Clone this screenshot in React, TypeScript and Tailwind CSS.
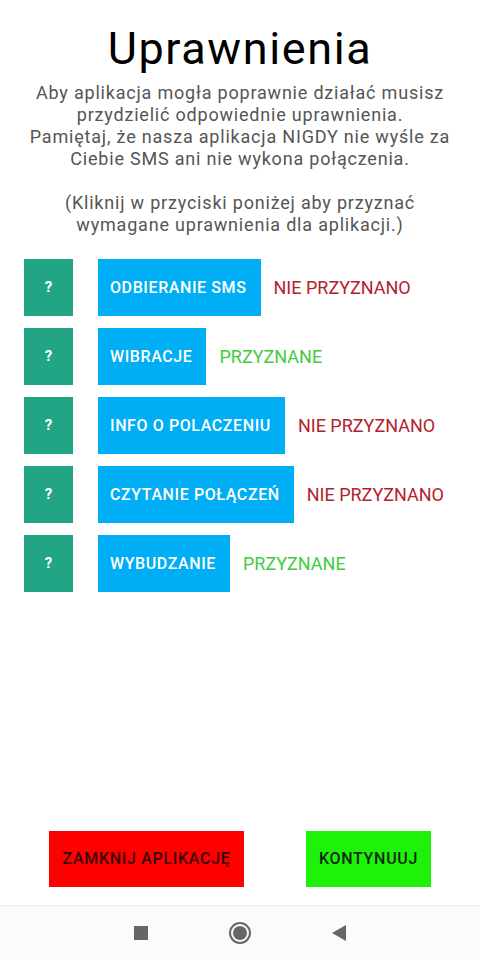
import { useState } from "react";

interface Permission {
    id: string;
    label: string;
    granted: boolean;
}

const permissions: Permission[] = [
    { id: "sms", label: "ODBIERANIE SMS", granted: false },
    { id: "vibrate", label: "WIBRACJE", granted: true },
    { id: "phone", label: "INFO O POLACZENIU", granted: false },
    { id: "calllog", label: "CZYTANIE POŁĄCZEŃ", granted: false },
    { id: "wake", label: "WYBUDZANIE", granted: true },
];

function PermissionRow({ permission }: { permission: Permission }) {
    return (
        <div className="flex items-center h-[57px]">
            <button className="w-[49px] h-[57px] ml-[24px] bg-[#22a585] text-white text-[15px] font-bold">
                ?
            </button>
            <button className="h-[57px] ml-[25px] pl-[12px] pr-[14px] bg-[#00aef5] text-white text-[16px] font-medium tracking-[0.6px]">
                {permission.label}
            </button>
            <span
                className={
                    permission.granted
                        ? "ml-[13px] text-[18px] text-[#3fcc3f]"
                        : "ml-[13px] text-[18px] text-[#b3212c]"
                }
            >
                {permission.granted ? "PRZYZNANE" : "NIE PRZYZNANO"}
            </span>
        </div>
    );
}

export default function App() {
    const [items] = useState(permissions);

    return (
        <div className="w-[480px] h-[960px] flex flex-col bg-white font-['Roboto',_'Noto_Sans',_sans-serif]">
            <div className="flex-1 flex flex-col">
                <h1 className="mt-[26px] text-[45px] leading-none tracking-[1.6px] text-center text-black">Uprawnienia</h1>
                <p className="mt-[11px] text-[18px] leading-[22px] tracking-[0.8px] text-center text-[#555555] whitespace-pre-line">
                    {"Aby aplikacja mogła poprawnie działać musisz\nprzydzielić odpowiednie uprawnienia.\nPamiętaj, że nasza aplikacja NIGDY nie wyśle za\nCiebie SMS ani nie wykona połączenia.\n\n(Kliknij w przyciski poniżej aby przyznać\nwymagane uprawnienia dla aplikacji.)"}
                </p>

                <div className="mt-[23px] flex flex-col gap-[12px]">
                    {items.map(p => (
                        <PermissionRow key={p.id} permission={p} />
                    ))}
                </div>
            </div>

            {/* Bottom actions */}
            <div className="flex justify-between pl-[49px] pr-[49px] pb-[18px]">
                <button className="w-[195px] h-[56px] bg-[#ff0000] text-[#3a0505] text-[16px] font-medium tracking-[0.7px]">
                    ZAMKNIJ APLIKACJĘ
                </button>
                <button className="w-[125px] h-[56px] bg-[#1ef20a] text-[#0f2a0a] text-[16px] font-medium tracking-[0.7px]">
                    KONTYNUUJ
                </button>
            </div>

            {/* Android nav bar */}
            <div className="h-[55px] border-t border-[#ececec] bg-[#fbfbfb] flex items-center justify-center gap-[81px]">
                <div className="w-[14px] h-[14px] bg-[#666666]" />
                <div className="w-[22px] h-[22px] rounded-full border-2 border-[#666666] flex items-center justify-center">
                    <div className="w-[14px] h-[14px] rounded-full bg-[#666666]" />
                </div>
                <svg width="14" height="16" viewBox="0 0 14 16">
                    <path d="M14 0 L0 8 L14 16 Z" fill="#666666" />
                </svg>
            </div>
        </div>
    );
}
